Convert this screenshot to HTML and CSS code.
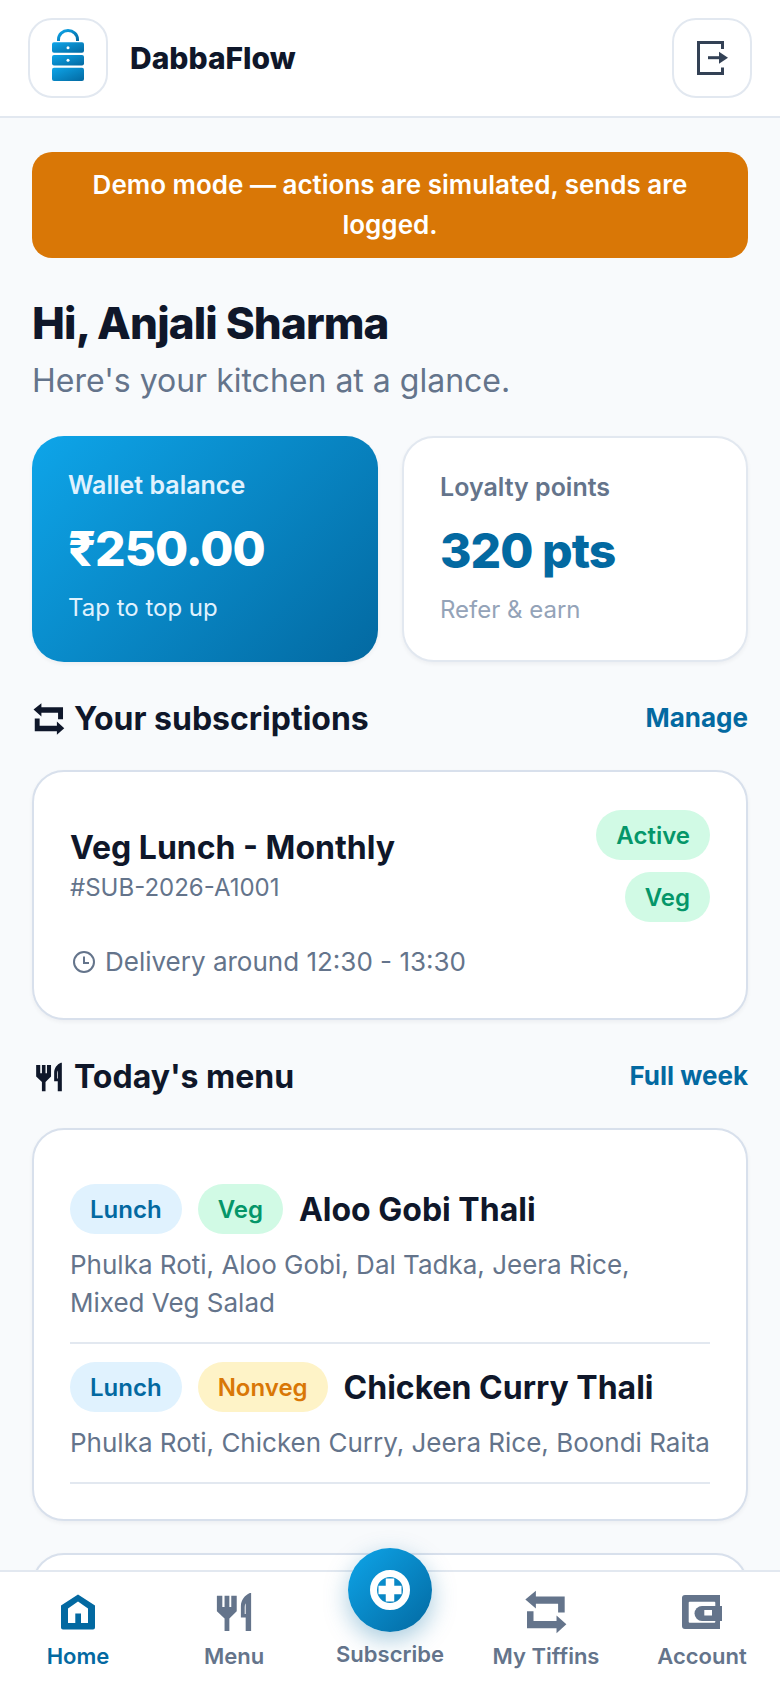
FILE: index.html
```html
<!DOCTYPE html>
<html lang="en">
<head>
<meta charset="utf-8">
<title>DabbaFlow</title>
<link rel="stylesheet" href="styles.css">
</head>
<body>
<svg class="defs" width="0" height="0" aria-hidden="true">
  <defs>
    <linearGradient id="logoGrad" x1="0" y1="0" x2="1" y2="1">
      <stop offset="0" stop-color="#0ea5e9"/><stop offset="1" stop-color="#0369a1"/>
    </linearGradient>
    <symbol id="i-repeat" viewBox="-3.400 -2.900 48.800 48.800"><path fill="currentColor" d="M0 8.700L10.700 0v5.700H40V22h-6.700v-9H10.700v5zM1.700 20.700h6.600v10h23.400V25l10 9-10 9v-5h-30z"/></symbol>
    <symbol id="i-menu" viewBox="11.500 2.500 150 150"><path fill="currentColor" fill-rule="evenodd" d="M33 27h17v35h7V27h15v35h6V27h17v48L72 98v39H57V98L33 75zM136 18h4v119h-17V95h-15V60c0-20 12-35 28-42zM123 50c-2 3-3 7-3 12v22h3z"/></symbol>
  </defs>
</svg>
<div class="app">
  <header class="topbar">
    <div class="brand">
      <div class="iconbox">
        <svg class="logo" viewBox="0 0 32 52" width="32" height="52">
          <path d="M6.500 12V10.500a9.500 9 0 0 1 19 0V12" fill="none" stroke="url(#logoGrad)" stroke-width="3"/>
          <rect x="0" y="13.300" width="32" height="10.400" rx="2" fill="url(#logoGrad)"/>
          <rect x="0" y="26" width="32" height="10.400" rx="2" fill="url(#logoGrad)"/>
          <rect x="0" y="38.700" width="32" height="13.300" rx="2" fill="url(#logoGrad)"/>
          <circle cx="16" cy="18.700" r="1.500" fill="#fff"/>
          <circle cx="16" cy="31.300" r="1.500" fill="#fff"/>
        </svg>
      </div>
      <span class="brand-name">DabbaFlow</span>
    </div>
    <button class="iconbox" type="button" aria-label="Log out">
      <svg viewBox="0 0 32 34" width="32" height="34" class="logout">
        <path d="M25.500 8V1.500H1.500V32.500H25.500V26.500" fill="none" stroke="currentColor" stroke-width="3"/>
        <path d="M11 16.700H22" stroke="currentColor" stroke-width="3"/>
        <path d="M22 10.700L31 16.700L22 22.700z" fill="currentColor"/>
      </svg>
    </button>
  </header>

  <main class="content">
    <div class="banner">Demo mode — actions are simulated, sends are logged.</div>

    <h1 class="greet">Hi, Anjali Sharma</h1>
    <p class="sub">Here's your kitchen at a glance.</p>

    <section class="stats">
      <div class="stat stat-wallet">
        <div class="stat-label">Wallet balance</div>
        <div class="stat-value">₹250.00</div>
        <div class="stat-note">Tap to top up</div>
      </div>
      <div class="stat stat-points">
        <div class="stat-label">Loyalty points</div>
        <div class="stat-value">320 pts</div>
        <div class="stat-note">Refer &amp; earn</div>
      </div>
    </section>

    <div class="section-head">
      <h2 class="section-title"><svg class="sec-icon"><use href="#i-repeat"/></svg>Your subscriptions</h2>
      <a class="section-link">Manage</a>
    </div>
    <section class="card sub-card">
      <div class="sub-top">
        <div class="sub-info">
          <div class="sub-name">Veg Lunch - Monthly</div>
          <div class="sub-id">#SUB-2026-A1001</div>
        </div>
        <div class="sub-tags">
          <span class="pill pill-green">Active</span>
          <span class="pill pill-green">Veg</span>
        </div>
      </div>
      <div class="delivery">
        <svg viewBox="0 0 24 24" width="24" height="24" class="clock"><circle cx="12" cy="12" r="10" fill="none" stroke="currentColor" stroke-width="2"/><path d="M12 6.500V13h5" fill="none" stroke="currentColor" stroke-width="2"/></svg>
        Delivery around 12:30 - 13:30
      </div>
    </section>

    <div class="section-head">
      <h2 class="section-title"><svg class="sec-icon"><use href="#i-menu"/></svg>Today's menu</h2>
      <a class="section-link">Full week</a>
    </div>
    <section class="card menu-card">
      <article class="dish">
        <div class="dish-head">
          <span class="pill pill-blue">Lunch</span>
          <span class="pill pill-green">Veg</span>
          <span class="dish-name">Aloo Gobi Thali</span>
        </div>
        <p class="dish-desc">Phulka Roti, Aloo Gobi, Dal Tadka, Jeera Rice, Mixed Veg Salad</p>
      </article>
      <article class="dish">
        <div class="dish-head">
          <span class="pill pill-blue">Lunch</span>
          <span class="pill pill-amber">Nonveg</span>
          <span class="dish-name">Chicken Curry Thali</span>
        </div>
        <p class="dish-desc">Phulka Roti, Chicken Curry, Jeera Rice, Boondi Raita</p>
      </article>
    </section>
    <section class="card next-card"></section>
  </main>

  <nav class="tabbar">
    <a class="tab tab-active">
      <svg class="tab-icon" viewBox="-7 -6.500 48 48"><path fill="currentColor" fill-rule="evenodd" d="M17 0l17 11v22a2 2 0 0 1-2 2H2a2 2 0 0 1-2-2V11zM17 7L7 14v14.500h7.300V19H20v9.500h7V14z"/></svg>
      <span>Home</span>
    </a>
    <a class="tab">
      <svg class="tab-icon"><use href="#i-menu"/></svg>
      <span>Menu</span>
    </a>
    <a class="tab tab-fab">
      <span class="fab">
        <svg viewBox="0 0 40 40" width="40" height="40"><circle cx="20" cy="20" r="16.500" fill="none" stroke="#fff" stroke-width="7"/><path d="M20 8.500v23M8.500 20h23" stroke="#fff" stroke-width="8.500"/></svg>
      </span>
      <span>Subscribe</span>
    </a>
    <a class="tab">
      <svg class="tab-icon"><use href="#i-repeat"/></svg>
      <span>My Tiffins</span>
    </a>
    <a class="tab">
      <svg class="tab-icon" viewBox="-4 -7 48 48">
        <path fill="currentColor" d="M3 0h35v11h2v15h-2v8H3a3 3 0 0 1-3-3V3a3 3 0 0 1 3-3z"/>
        <rect x="6.700" y="6.700" width="26.600" height="21" rx="1" fill="#fff"/>
        <path fill="currentColor" d="M40 11H20a7.500 7.500 0 0 0 0 15h20z"/>
        <rect x="22.300" y="15" width="7.700" height="5.500" fill="#fff"/>
      </svg>
      <span>Account</span>
    </a>
  </nav>
</div>
</body>
</html>
```

FILE: styles.css
```css
* { box-sizing: border-box; }
html, body { margin: 0; padding: 0; }
body {
  font-family: Inter, "Noto Sans", sans-serif;
  background: #f8fafc;
  color: #0f172a;
}
.defs { position: absolute; }
.app { height: 1688px; overflow: hidden; position: relative; }

.topbar {
  height: 118px;
  padding: 0 28px;
  display: flex;
  align-items: center;
  justify-content: space-between;
  background: #fff;
  border-bottom: 2px solid #e2e8f0;
}
.brand { display: flex; align-items: center; gap: 22px; }
.brand-name { font-size: 30px; font-weight: 800; }
.iconbox {
  width: 80px;
  height: 80px;
  border: 2px solid #e2e8f0;
  border-radius: 24px;
  background: #fff;
  display: flex;
  align-items: center;
  justify-content: center;
  padding: 0;
}
.logo { margin-bottom: 6px; }
.logout { color: #334155; margin-left: 2px; }

.content { padding: 34px 32px 0; }
.banner {
  background: #d97706;
  color: #fff;
  border-radius: 20px;
  padding: 13px 32px;
  text-align: center;
  font-size: 26px;
  font-weight: 600;
  line-height: 40px;
}
.greet { margin: 37px 0 0; font-size: 44px; font-weight: 800; line-height: 56px; letter-spacing: -0.02em; }
.sub { margin: 8px 0 0; font-size: 32px; line-height: 44px; color: #64748b; }

.stats { display: grid; grid-template-columns: 1fr 1fr; gap: 24px; margin-top: 33px; }
.stat {
  height: 226px;
  border-radius: 32px;
  padding: 31px 36px;
  background: #fff;
  border: 2px solid #e2e8f0;
  box-shadow: 0 2px 4px rgba(15, 23, 42, .05);
}
.stat-wallet {
  background: linear-gradient(135deg, #0ea5e9, #0369a1);
  border: 0;
  color: #fff;
}
.stat-label { font-size: 25px; font-weight: 600; line-height: 36px; color: #64748b; }
.stat-value { margin-top: 13px; font-size: 48px; font-weight: 800; line-height: 66px; color: #0369a1; letter-spacing: -0.02em; }
.stat-note { margin-top: 9px; font-size: 24px; line-height: 34px; color: #94a3b8; }
.stat-wallet .stat-label { color: #e0f2fe; }
.stat-wallet .stat-value { color: #fff; }
.stat-wallet .stat-note { color: #e0f2fe; }

.section-head {
  margin-top: 35px;
  display: flex;
  align-items: center;
  justify-content: space-between;
}
.section-title { margin: 0; font-size: 32px; font-weight: 700; line-height: 44px; display: flex; align-items: center; gap: 7px; }
.sec-icon { width: 36px; height: 36px; margin-left: -1px; }
.section-link { font-size: 26px; font-weight: 700; color: #0369a1; margin-bottom: 4px; }

.card {
  margin-top: 29px;
  background: #fff;
  border: 2px solid #d8e0ec;
  border-radius: 32px;
  padding: 36px;
  box-shadow: 0 2px 4px rgba(15, 23, 42, .05);
}
.sub-card { padding: 38px 36px 38px; }
.sub-top { display: flex; justify-content: space-between; align-items: flex-start; }
.sub-info { padding-top: 16px; }
.sub-name { font-size: 32px; font-weight: 700; line-height: 44px; }
.sub-id { margin-top: 1px; font-size: 24px; line-height: 34px; color: #64748b; }
.sub-tags { display: flex; flex-direction: column; align-items: flex-end; gap: 12px; }
.pill {
  display: inline-block;
  height: 50px;
  padding: 0 20px;
  border-radius: 25px;
  font-size: 24px;
  font-weight: 600;
  line-height: 52px;
  white-space: nowrap;
}
.pill-green { background: #d1fae5; color: #059669; }
.pill-blue { background: #e0f2fe; color: #0369a1; }
.pill-amber { background: #fef3c7; color: #d97706; }
.delivery { margin-top: 22px; display: flex; align-items: center; gap: 9px; font-size: 26px; line-height: 36px; color: #64748b; }
.clock { margin-left: 2px; }

.menu-card { padding-bottom: 35px; }
.dish { padding: 18px 0 20px; border-bottom: 2px solid #e2e8f0; }
.dish-head { display: flex; align-items: center; gap: 16px; }
.dish-name { font-size: 32px; font-weight: 700; }
.dish-desc { margin: 12px 0 0; font-size: 26px; line-height: 38px; color: #64748b; }
.next-card { margin-top: 32px; height: 100px; }

.tabbar {
  position: fixed;
  left: 0;
  right: 0;
  bottom: 0;
  height: 118px;
  background: #fff;
  border-top: 2px solid #e2e8f0;
  display: grid;
  grid-template-columns: repeat(5, 1fr);
  align-items: end;
  padding: 0 0 17px;
}
.tab {
  display: flex;
  flex-direction: column;
  align-items: center;
  gap: 5px;
  color: #64748b;
  font-size: 22px;
  font-weight: 600;
  line-height: 30px;
}
.tab-icon { display: block; width: 48px; height: 48px; }
.tab-active { color: #0369a1; }
.tab-fab { position: relative; margin-bottom: 2px; }
.fab {
  position: absolute;
  left: 50%;
  bottom: 37px;
  margin-left: -42px;
  width: 84px;
  height: 84px;
  border-radius: 50%;
  background: linear-gradient(135deg, #0ea5e9, #0369a1);
  box-shadow: 0 8px 24px rgba(3, 105, 161, .35);
  display: flex;
  align-items: center;
  justify-content: center;
}
```
